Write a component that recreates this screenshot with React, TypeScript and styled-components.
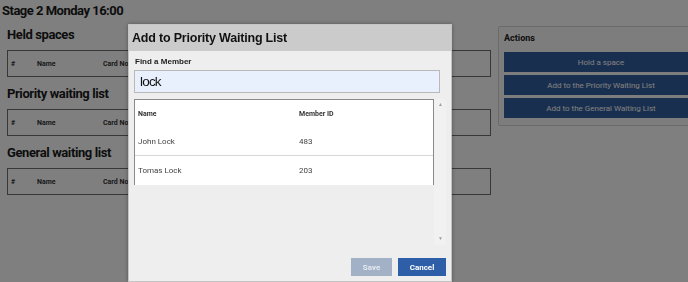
import React from "react";
import styled, { createGlobalStyle } from "styled-components";

const Global = createGlobalStyle`
  html, body { margin: 0; padding: 0; background: #ffffff; overflow: hidden; }
  body { font-family: Roboto, "Liberation Sans", Arial, sans-serif; color: #222; }
  * { box-sizing: border-box; }
`;

const Page = styled.div`
  width: 720px;
  height: 282px;
  padding: 0 0 0 2px;
`;

const PageTitle = styled.h1`
  margin: 0;
  padding-top: 2px;
  font-size: 13px;
  letter-spacing: -0.5px;
  font-weight: 700;
  line-height: 18px;
  color: #1a1a1a;
`;

const Columns = styled.div`
  display: flex;
  gap: 7px;
  padding-left: 5px;
  margin-top: 8px;
`;

const Lists = styled.div`
  width: 484px;
  display: flex;
  flex-direction: column;
  gap: 10px;
`;

const Section = styled.section`
  display: flex;
  flex-direction: column;
`;

const SectionTitle = styled.h2`
  margin: 0 0 8px 0;
  font-size: 13px;
  letter-spacing: -0.4px;
  font-weight: 700;
  line-height: 14px;
  color: #1a1a1a;
`;

const ListBox = styled.div`
  height: 27px;
  border: 1px solid #6e6e6e;
  display: flex;
  align-items: center;
  padding-left: 3px;
  font-size: 7px;
  font-weight: 700;
  color: #333;
`;

const HeadCell = styled.span<{ $w: number }>`
  width: ${(p) => p.$w}px;
`;

const ActionsPanel = styled.div`
  width: 206px;
  height: 100px;
  margin-top: -2px;
  border: 1px solid #d6d6d6;
  border-radius: 2px;
  background: #fbfbfb;
  padding: 5px 5px;
  display: flex;
  flex-direction: column;
  gap: 3px;
`;

const ActionsTitle = styled.div`
  font-size: 9px;
  font-weight: 700;
  color: #222;
  line-height: 13px;
  margin-bottom: 4px;
`;

const ActionButton = styled.button`
  height: 20px;
  width: 194px;
  border: none;
  background: #335e9e;
  color: #ffffff;
  font-family: Roboto, sans-serif;
  font-size: 8px;
  padding: 0;
`;

const Overlay = styled.div`
  position: fixed;
  inset: 0;
  background: rgba(0, 0, 0, 0.5);
`;

const Dialog = styled.div`
  position: fixed;
  left: 128px;
  top: 24px;
  width: 324px;
  height: 258px;
  background: #eeeeee;
  border: 1px solid #c4c4c4;
  box-shadow: 0 0 4px rgba(0, 0, 0, 0.35);
  display: flex;
  flex-direction: column;
  font-family: "Liberation Sans", Arial, sans-serif;
`;

const DialogHeader = styled.div`
  height: 26px;
  background: #cbcbcb;
  display: flex;
  align-items: center;
  padding-left: 3px;
  flex-shrink: 0;
`;

const DialogTitle = styled.h3`
  margin: 0;
  font-size: 12.5px;
  letter-spacing: -0.2px;
  font-weight: 700;
  color: #111;
`;

const DialogBody = styled.div`
  flex: 1;
  display: flex;
  flex-direction: column;
  padding: 6px 5px 0 5px;
`;

const Label = styled.label`
  font-size: 8px;
  font-weight: 700;
  color: #222;
  line-height: 10px;
  margin-left: 1px;
  margin-bottom: 3px;
`;

const SearchInput = styled.input`
  width: 306px;
  height: 23px;
  background: #e8f0fe;
  border: 1px solid #b9b9b9;
  font-family: "Liberation Sans", Arial, sans-serif;
  font-size: 13.5px;
  letter-spacing: -0.8px;
  color: #111;
  padding: 0 0 0 5px;
  outline: none;
`;

const ResultsArea = styled.div`
  margin-top: 6px;
  width: 312px;
  height: 146px;
  display: flex;
`;

const ResultsTable = styled.div`
  width: 300px;
  align-self: flex-start;
  background: #ffffff;
  border: 1px solid #8a8a8a;
  border-bottom: none;
  font-family: Roboto, sans-serif;
`;

const Row = styled.div<{ $head?: boolean; $sep?: boolean }>`
  display: grid;
  grid-template-columns: 161px 1fr;
  height: ${(p) => (p.$head ? 27 : 29)}px;
  align-items: center;
  padding-left: 3px;
  font-size: ${(p) => (p.$head ? 7 : 8)}px;
  font-weight: ${(p) => (p.$head ? 700 : 400)};
  color: ${(p) => (p.$head ? "#333" : "#444")};
  border-bottom: ${(p) => (p.$sep ? "1px solid #d8d8d8" : "none")};
`;

const Scrollbar = styled.div`
  width: 12px;
  background: #f1f1f1;
  display: flex;
  flex-direction: column;
  justify-content: space-between;
  align-items: center;
  padding: 2px 0 4px 1px;
  font-size: 5px;
  color: #a0a0a0;
  line-height: 6px;
`;

const Footer = styled.div`
  display: flex;
  justify-content: flex-end;
  gap: 6px;
  padding: 0 5px 5px 0;
`;

const DialogButton = styled.button<{ $primary?: boolean }>`
  height: 18px;
  width: ${(p) => (p.$primary ? 48 : 41)}px;
  border: none;
  background: ${(p) => (p.$primary ? "#2e5ea7" : "#a2b1c6")};
  color: ${(p) => (p.$primary ? "#ffffff" : "#e6ebf2")};
  font-family: Roboto, sans-serif;
  font-size: 8px;
  font-weight: 700;
  padding: 0;
`;

const lists = ["Held spaces", "Priority waiting list", "General waiting list"];

const members = [
  { name: "John Lock", id: "483" },
  { name: "Tomas Lock", id: "203" },
];

export default function App() {
  return (
    <>
      <Global />
      <Page>
        <PageTitle>Stage 2 Monday 16:00</PageTitle>
        <Columns>
          <Lists>
            {lists.map((t) => (
              <Section key={t}>
                <SectionTitle>{t}</SectionTitle>
                <ListBox>
                  <HeadCell $w={26}>#</HeadCell>
                  <HeadCell $w={66}>Name</HeadCell>
                  <HeadCell $w={60}>Card No</HeadCell>
                </ListBox>
              </Section>
            ))}
          </Lists>
          <ActionsPanel>
            <ActionsTitle>Actions</ActionsTitle>
            <ActionButton>Hold a space</ActionButton>
            <ActionButton>Add to the Priority Waiting List</ActionButton>
            <ActionButton>Add to the General Waiting List</ActionButton>
          </ActionsPanel>
        </Columns>
      </Page>
      <Overlay />
      <Dialog>
        <DialogHeader>
          <DialogTitle>Add to Priority Waiting List</DialogTitle>
        </DialogHeader>
        <DialogBody>
          <Label>Find a Member</Label>
          <SearchInput defaultValue="lock" />
          <ResultsArea>
            <ResultsTable>
              <Row $head>
                <span>Name</span>
                <span>Member ID</span>
              </Row>
              {members.map((m, i) => (
                <Row key={m.id} $sep={i < members.length - 1}>
                  <span>{m.name}</span>
                  <span>{m.id}</span>
                </Row>
              ))}
            </ResultsTable>
            <Scrollbar>
              <span>▲</span>
              <span>▼</span>
            </Scrollbar>
          </ResultsArea>
        </DialogBody>
        <Footer>
          <DialogButton>Save</DialogButton>
          <DialogButton $primary>Cancel</DialogButton>
        </Footer>
      </Dialog>
    </>
  );
}
